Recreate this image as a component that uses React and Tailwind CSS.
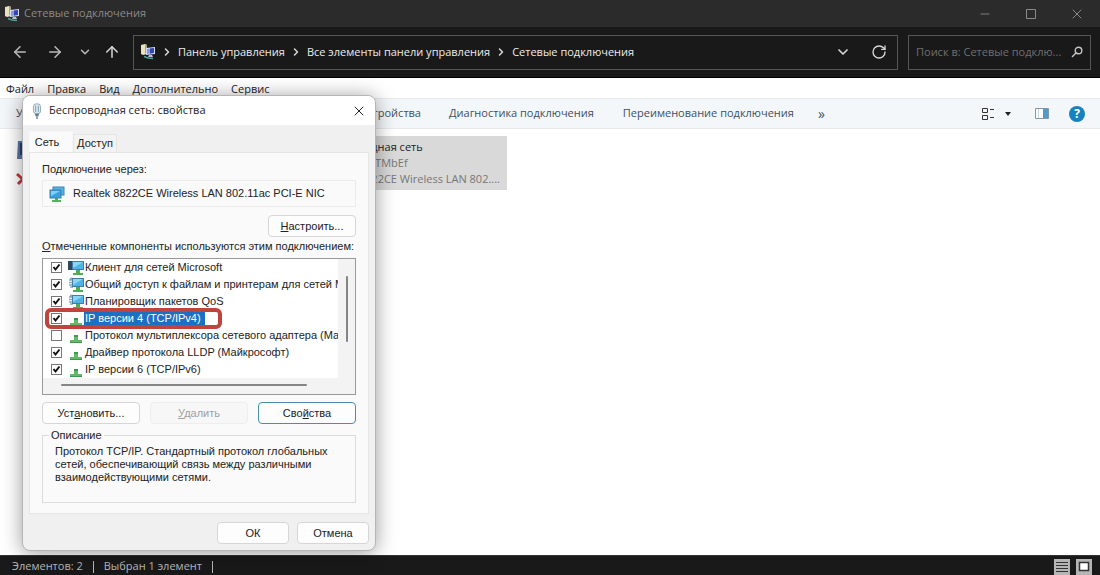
import { useState } from 'react'
import {
  ArrowLeft,
  ArrowRight,
  ArrowUp,
  ChevronDown,
  ChevronRight,
  Minus,
  RotateCw,
  X,
} from 'lucide-react'

const COMPONENTS = [
  { id: 'client', label: 'Клиент для сетей Microsoft', icon: 'client', checked: true },
  { id: 'share',  label: 'Общий доступ к файлам и принтерам для сетей Mi', icon: 'service', checked: true },
  { id: 'qos',    label: 'Планировщик пакетов QoS', icon: 'service', checked: true },
  { id: 'ipv4',   label: 'IP версии 4 (TCP/IPv4)', icon: 'protocol', checked: true },
  { id: 'mux',    label: 'Протокол мультиплексора сетевого адаптера (Май', icon: 'protocol', checked: false },
  { id: 'lldp',   label: 'Драйвер протокола LLDP (Майкрософт)', icon: 'protocol', checked: true },
  { id: 'ipv6',   label: 'IP версии 6 (TCP/IPv6)', icon: 'protocol', checked: true },
]

/* ---------- icons ---------- */

function NetworkIcon() {
  return (
    <svg viewBox="0 0 16 16" className="size-4 shrink-0" aria-hidden="true">
      <path d="M1 1l4-1 2 1v9l-4 1-2-1z" fill="#e8e2bd" />
      <path d="M5 0l2 1v9l-2-1z" fill="#a7a68a" />
      <path d="M6 4l9-1v7l-9 1z" fill="#d5dcf5" />
      <path d="M7 5l7-1v5l-7 1z" fill="#8d97dd" />
      <path d="M10 4.500l4-.5v5l-4 .5z" fill="#3645b4" />
      <path d="M9 11h3l1 2H8z" fill="#b9c3d8" />
      <path d="M4 12.500l4 1.500 5 .5" stroke="#4aa39a" strokeWidth="1.6" fill="none" />
    </svg>
  )
}

function AdapterIcon() {
  return (
    <svg viewBox="0 0 12 18" className="h-4 w-3 shrink-0" aria-hidden="true">
      <rect x="2" y="1" width="8" height="11" rx="3" fill="#dfeaf0" stroke="#8ba3b0" />
      <path d="M4.5 3v7M7.5 3v7" stroke="#6e93a8" />
      <path d="M3.5 12h5l-1 3h-3z" fill="#5f7f90" />
      <path d="M6 15v3" stroke="#5f7f90" strokeWidth="1.5" />
    </svg>
  )
}

function MonitorsIcon() {
  return (
    <svg viewBox="0 0 16 16" className="size-4 shrink-0" aria-hidden="true">
      <rect x="4" y="1" width="11" height="8" fill="#55b4e6" stroke="#3f86b4" />
      <rect x="1" y="4" width="11" height="8" fill="#38a0dd" stroke="#3f7ea8" />
      <path d="M2 5h9l-9 5z" fill="#7fd0f5" />
      <path d="M6 12h3v2H6z" fill="#58a55c" />
      <path d="M3 15h9" stroke="#58b25c" strokeWidth="2" />
    </svg>
  )
}

function ComponentIcon({ type }) {
  if (type === 'protocol') {
    return (
      <svg viewBox="0 0 16 16" className="size-4 shrink-0" aria-hidden="true">
        <path d="M6 7h4v5h4v3H2v-3h4z" fill="#62b968" />
        <path d="M6 7h4v2H6zM2 14h12v1H2z" fill="#3c9a50" />
      </svg>
    )
  }
  return (
    <svg viewBox="0 0 16 16" className="size-4 shrink-0" aria-hidden="true">
      {type === 'client' ? (
        <path d="M0 1h5v9H0z" fill="#30475c" />
      ) : (
        <path d="M1 3h4M1 5.5h3M1 8h4M2 1.5h3M2 10h3" stroke="#86a8bd" strokeWidth="1.5" />
      )}
      <rect x="4.5" y="1.5" width="11" height="8" fill="#4fb3e8" stroke="#3f7ea8" />
      <path d="M5 2h10l-10 6z" fill="#8ad4f6" />
      <path d="M8 10h4v3h3v2H5v-2h3z" fill="#4fae55" />
    </svg>
  )
}

function SearchIcon() {
  return (
    <svg viewBox="0 0 12 12" className="size-3 shrink-0" fill="none" stroke="#c4c4c4" strokeWidth="1.4" aria-hidden="true">
      <circle cx="7.5" cy="4.5" r="3.3" />
      <path d="M5.2 6.8L1 11" />
    </svg>
  )
}

/* ---------- explorer window ---------- */

function TitleBar() {
  return (
    <div className="flex h-[27px] items-center bg-[#2b2b2b] pl-1 text-[#8a8a8a]">
      <NetworkIcon />
      <span className="ml-1 flex-1 text-[11px]">Сетевые подключения</span>
      <button aria-label="Свернуть" className="flex w-[46px] justify-center"><Minus className="size-3.5" strokeWidth={1.5} /></button>
      <button aria-label="Развернуть" className="flex w-[46px] justify-center">
        <svg viewBox="0 0 10 10" className="size-2.5" fill="none" stroke="currentColor" aria-hidden="true">
          <path d="M.5.5h9v9h-9z" />
        </svg>
      </button>
      <button aria-label="Закрыть" className="flex w-[46px] justify-center"><X className="size-4" strokeWidth={1.5} /></button>
    </div>
  )
}

function AddressBar() {
  const crumbs = ['Панель управления', 'Все элементы панели управления', 'Сетевые подключения']

  return (
    <div className="flex h-[51px] items-center border-b border-black bg-[#191919] pr-[9px] text-[11px] text-[#d8d8d8]">
      <div className="flex w-[133px] shrink-0 items-center justify-between pr-3 pl-[11px]">
        <button aria-label="Назад" className="text-[#bbb]"><ArrowLeft className="size-[18px]" strokeWidth={2} /></button>
        <button aria-label="Вперёд" className="ml-1.5 text-[#bbb]"><ArrowRight className="size-[18px]" strokeWidth={2} /></button>
        <button aria-label="Журнал" className="ml-1 text-[#bbb]"><ChevronDown className="size-3.5" strokeWidth={2.5} /></button>
        <button aria-label="Вверх"><ArrowUp className="size-[18px]" strokeWidth={2} /></button>
      </div>
      <nav className="flex h-[35px] flex-1 items-center border border-[#555] pl-1.5">
        <NetworkIcon />
        {crumbs.map(c => (
          <div key={c} className="flex items-center">
            <ChevronRight className="mx-[5px] size-3" strokeWidth={3} />
            <a href="#" className="text-[#ececec]">{c}</a>
          </div>
        ))}
        <button aria-label="Показать пути" className="ml-auto"><ChevronDown className="size-4" strokeWidth={2.5} /></button>
        <button aria-label="Обновить" className="mr-2.5 ml-5"><RotateCw className="size-4" strokeWidth={2} /></button>
      </nav>
      <label className="ml-2.5 flex h-[35px] w-[183px] items-center border border-[#555] px-[7px]">
        <input
          type="text"
          aria-label="Поиск"
          placeholder="Поиск в: Сетевые подклю..."
          className="min-w-0 flex-1 bg-transparent text-[11px] outline-none placeholder:text-[#6f6f6f]"
        />
        <SearchIcon />
      </label>
    </div>
  )
}

function MenuBar() {
  return (
    <div className="flex h-5 items-center gap-[13px] bg-white pt-0.5 pl-1.5 text-[11px] text-[#222]">
      {['Файл', 'Правка', 'Вид', 'Дополнительно', 'Сервис'].map(m => (
        <button key={m}>{m}</button>
      ))}
    </div>
  )
}

function Toolbar() {
  return (
    <div className="flex h-[31px] items-center border-y border-[#e6eaee] bg-[#f4f7fa] pr-[15px] pl-4 text-[11px] text-[#40505f]">
      <div className="flex w-[405px] shrink-0 items-center justify-between whitespace-nowrap">
        <button>Упорядочить</button>
        <button>Отключение сетевого устройства</button>
      </div>
      <button className="ml-7">Диагностика подключения</button>
      <button className="ml-[29px]">Переименование подключения</button>
      <button className="ml-6 text-[14px] leading-none" aria-label="Ещё">»</button>
      <div className="ml-auto flex items-center">
        <button className="flex items-center gap-2.5" aria-label="Вид">
          <svg viewBox="0 0 14 14" className="size-3.5" fill="none" stroke="#333" aria-hidden="true">
            <path d="M1.5 1.5h5v4h-5zM1.5 8.5h5v4h-5zM9 2.5h4M9 10.5h4" />
          </svg>
          <svg viewBox="0 0 6 4" className="h-1 w-1.5" aria-hidden="true"><path d="M0 0h6L3 4z" fill="#222" /></svg>
        </button>
        <button className="ml-6" aria-label="Область просмотра">
          <svg viewBox="0 0 14 11" className="h-[11px] w-3.5" aria-hidden="true">
            <path d="M.5.5h13v10H.5z" fill="#fff" stroke="#7f97a8" />
            <path d="M3.5 1v9" stroke="#c6d4de" />
            <path d="M8 1h5v9H8z" fill="#4d9ccb" />
          </svg>
        </button>
        <button aria-label="Справка" className="ml-5 size-4 rounded-full bg-[#1683c0] text-[12px] leading-4 font-bold text-white">?</button>
      </div>
    </div>
  )
}

function Connections() {
  return (
    <div className="flex flex-1 items-start bg-white pt-[7px] pl-2 text-[11px] leading-4">
      <div className="flex h-[54px] w-[249px] flex-col items-start justify-between py-1 pl-2">
        <svg viewBox="0 0 24 20" className="h-5 w-6" aria-hidden="true">
          <path d="M2 1h20v18H1z" fill="#5876a8" />
          <path d="M4 3h16v12H4z" fill="#27406f" />
        </svg>
        <svg viewBox="0 0 14 14" className="size-3.5" aria-hidden="true">
          <path d="M1 2l11 10M12 2L2 12" stroke="#c5383a" strokeWidth="3" />
        </svg>
      </div>
      <div className="flex h-[54px] w-[250px] flex-col bg-[#d9d9d9] py-[3px] pr-[7px] pl-[63px] whitespace-nowrap">
        <p className="text-[#222]">Беспроводная сеть</p>
        <p className="text-[#777]">Keenetic_5TMbEf</p>
        <p className="self-end text-[#777]">Realtek 8822CE Wireless LAN 802....</p>
      </div>
    </div>
  )
}

function StatusBar() {
  return (
    <div className="flex h-5 items-center border-t border-[#333] bg-[#191919] pt-0.5 pr-2 pl-3 text-[11px] text-[#b9b9b9]">
      <span>Элементов: 2</span>
      <span className="ml-2.5 h-3 w-px bg-[#b9b9b9]" />
      <span className="ml-2.5">Выбран 1 элемент</span>
      <span className="ml-2.5 h-3 w-px bg-[#b9b9b9]" />
      <div className="ml-auto flex gap-1.5">
        <button aria-label="Таблица">
          <svg viewBox="0 0 16 16" className="size-4" aria-hidden="true">
            <path d="M0 0h16v16H0z" fill="#b5b5b5" />
            <path d="M2 3.5h12M2 6.5h12M2 9.5h12M2 12.5h12" stroke="#333" />
          </svg>
        </button>
        <button aria-label="Крупные значки">
          <svg viewBox="0 0 16 16" className="size-4" aria-hidden="true">
            <path d="M0 0h16v16H0z" fill="#b5b5b5" />
            <path d="M3.5 3.5h9v8h-9z" fill="#fff" stroke="#333" strokeWidth="1.5" />
          </svg>
        </button>
      </div>
    </div>
  )
}

/* ---------- properties dialog ---------- */

function DialogButton({ children, className = 'border-[#d6d6d6]', ...props }) {
  return (
    <button className={`h-[22px] rounded-[4px] border bg-[#fdfdfd] text-[11px] disabled:border-[#eee] disabled:bg-[#f7f7f7] disabled:text-[#a0a0a0] ${className}`} {...props}>
      {children}
    </button>
  )
}

function ComponentRow({ item, selected, checked, onToggle }) {
  return (
    <li className="relative h-[17px]">
      <label className="flex h-full items-center whitespace-nowrap">
        <span className="relative ml-2 size-[11px] shrink-0">
          <input
            type="checkbox"
            checked={checked}
            onChange={onToggle}
            className="peer block size-[11px] appearance-none border border-[#777] bg-white"
          />
          <svg viewBox="0 0 11 11" className="pointer-events-none absolute inset-0 hidden size-[11px] peer-checked:block" fill="none" stroke="#111" strokeWidth="2" aria-hidden="true">
            <path d="M2.5 5l2 2.5 4-5" />
          </svg>
        </span>
        <span className="ml-1.5"><ComponentIcon type={item.icon} /></span>
        <span className={selected ? 'bg-[#1c70c4] pr-1 pl-px leading-[15px] text-white' : 'pl-px leading-[15px]'}>
          {item.label}
        </span>
      </label>
      {selected && (
        <span className="pointer-events-none absolute -top-0.5 left-0.5 h-[21px] w-[177px] rounded-md border-4 border-[#c0443e]" />
      )}
    </li>
  )
}

function PropertiesDialog() {
  const [checked, setChecked] = useState(
    Object.fromEntries(COMPONENTS.map(c => [c.id, c.checked]))
  )

  return (
    <div
      role="dialog"
      aria-label="Беспроводная сеть: свойства"
      className="absolute top-[95px] left-[22px] w-[354px] overflow-hidden rounded-lg border border-[#b5b5b5] bg-[#f0f0f0] font-['Liberation_Sans',sans-serif] text-[11px] text-[#222] shadow-[0_2px_20px_rgba(0,0,0,0.4)]"
    >
      <div className="flex h-[29px] items-center bg-white pr-2 pl-2 font-['Open_Sans',sans-serif]">
        <AdapterIcon />
        <span className="ml-1.5 flex-1">Беспроводная сеть: свойства</span>
        <button aria-label="Закрыть"><X className="size-4" strokeWidth={1.5} /></button>
      </div>

      <div className="px-1.5 pt-1.5 pb-1.5">
        <div role="tablist" className="flex items-end">
          <button role="tab" aria-selected="true" className="h-[21px] w-11 border border-b-0 border-[#f6f6f6] bg-[#fafafa] pr-2">Сеть</button>
          <button role="tab" aria-selected="false" className="h-[18px] w-11 border border-b-0 border-[#e6e6e6] bg-[#f3f3f3]">Доступ</button>
        </div>

        <div className="flex flex-col border border-[#e6e6e6] bg-[#fafafa] px-3 pt-2 pb-2.5">
          <p className="leading-4">Подключение через:</p>
          <div className="mt-[3px] flex h-[27px] items-center gap-2 border border-[#ececec] pl-1.5">
            <MonitorsIcon />
            <span>Realtek 8822CE Wireless LAN 802.11ac PCI-E NIC</span>
          </div>
          <DialogButton className="mt-2 w-[88px] self-end border-[#d6d6d6]"><u>Н</u>астроить...</DialogButton>
          <p className="mt-px leading-4 whitespace-nowrap"><u>О</u>тмеченные компоненты используются этим подключением:</p>

          <div className="mt-1 border border-[#999] bg-[#f3f3f3]">
            <div className="flex">
              <ul className="min-w-0 flex-1 overflow-x-clip bg-white">
                {COMPONENTS.map(item => (
                  <ComponentRow
                    key={item.id}
                    item={item}
                    selected={item.id === 'ipv4'}
                    checked={checked[item.id]}
                    onToggle={() => setChecked(c => ({ ...c, [item.id]: !c[item.id] }))}
                  />
                ))}
              </ul>
              <div className="flex w-[17px] justify-center pt-[17px]">
                <span className="h-[66px] w-0.5 rounded-full bg-[#858585]" />
              </div>
            </div>
            <div className="flex h-4 items-start pt-1.5 pl-[18px]">
              <span className="h-0.5 w-[246px] rounded-full bg-[#858585]" />
            </div>
          </div>

          <div className="mt-[7px] grid grid-cols-3 gap-2.5">
            <DialogButton>Уст<u>а</u>новить...</DialogButton>
            <DialogButton disabled><u>У</u>далить</DialogButton>
            <DialogButton className="border-[#4a8fa8]">Сво<u>й</u>ства</DialogButton>
          </div>

          <fieldset className="mt-[3px] h-[76px] border border-[#dcdcdc] px-3">
            <legend className="-ml-1.5 px-0.5 leading-4">Описание</legend>
            <p className="mt-0.5 leading-[13px]">
              Протокол TCP/IP. Стандартный протокол глобальных сетей, обеспечивающий связь между различными взаимодействующими сетями.
            </p>
          </fieldset>
        </div>

        <div className="mt-2 flex justify-end gap-2">
          <DialogButton className="w-[72px] border-[#d6d6d6]">ОК</DialogButton>
          <DialogButton className="w-[72px] border-[#d6d6d6]">Отмена</DialogButton>
        </div>
      </div>
    </div>
  )
}

export default function App() {
  return (
    <div className="relative flex min-h-screen flex-col overflow-hidden bg-white font-['Open_Sans',sans-serif]">
      <TitleBar />
      <AddressBar />
      <MenuBar />
      <Toolbar />
      <Connections />
      <StatusBar />
      <PropertiesDialog />
    </div>
  )
}
